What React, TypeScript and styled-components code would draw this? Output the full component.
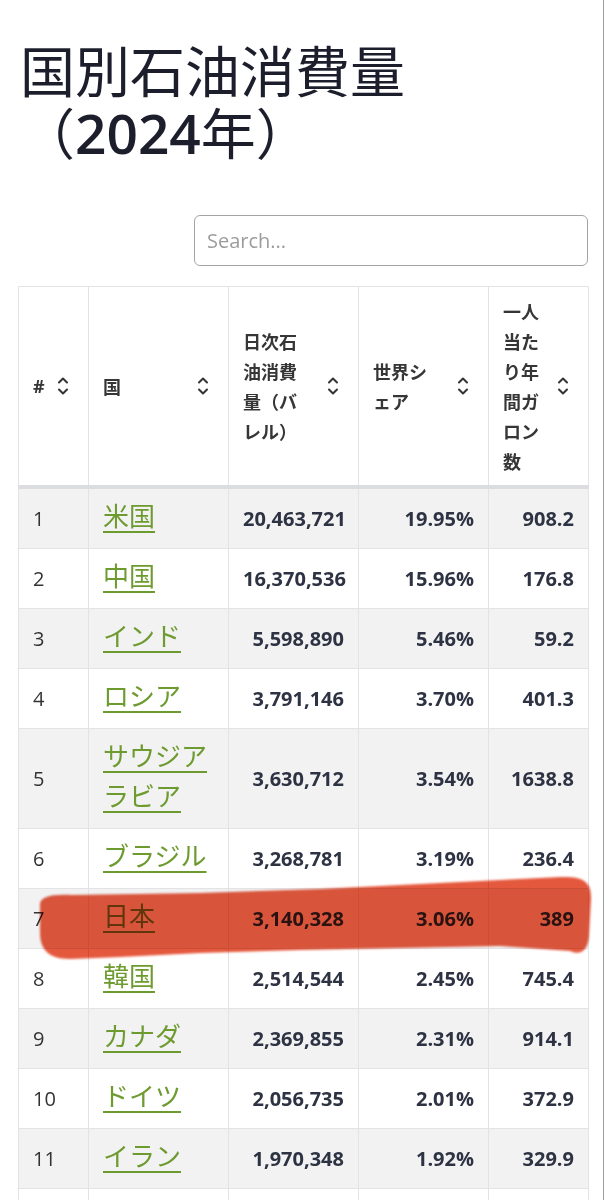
import React from 'react';
import styled, { createGlobalStyle } from 'styled-components';

const GlobalStyle = createGlobalStyle`
  html, body {
    margin: 0;
    padding: 0;
    background: #ffffff;
  }
  body {
    font-family: 'Open Sans', 'Noto Sans CJK JP', sans-serif;
    color: #2e3343;
  }
`;

type CountryRow = {
  rank: number;
  country: string;
  barrels: string;
  share: string;
  perCapita: string;
};

const rows: CountryRow[] = [
  { rank: 1, country: '米国', barrels: '20,463,721', share: '19.95%', perCapita: '908.2' },
  { rank: 2, country: '中国', barrels: '16,370,536', share: '15.96%', perCapita: '176.8' },
  { rank: 3, country: 'インド', barrels: '5,598,890', share: '5.46%', perCapita: '59.2' },
  { rank: 4, country: 'ロシア', barrels: '3,791,146', share: '3.70%', perCapita: '401.3' },
  { rank: 5, country: 'サウジアラビア', barrels: '3,630,712', share: '3.54%', perCapita: '1638.8' },
  { rank: 6, country: 'ブラジル', barrels: '3,268,781', share: '3.19%', perCapita: '236.4' },
  { rank: 7, country: '日本', barrels: '3,140,328', share: '3.06%', perCapita: '389' },
  { rank: 8, country: '韓国', barrels: '2,514,544', share: '2.45%', perCapita: '745.4' },
  { rank: 9, country: 'カナダ', barrels: '2,369,855', share: '2.31%', perCapita: '914.1' },
  { rank: 10, country: 'ドイツ', barrels: '2,056,735', share: '2.01%', perCapita: '372.9' },
  { rank: 11, country: 'イラン', barrels: '1,970,348', share: '1.92%', perCapita: '329.9' },
];

const columns = [
  { key: 'rank', label: '#', width: 70 },
  { key: 'country', label: '国', width: 140 },
  { key: 'barrels', label: '日次石油消費量（バレル）', width: 130 },
  { key: 'share', label: '世界シェア', width: 130 },
  { key: 'perCapita', label: '一人当たり年間ガロン数', width: 100 },
];

const SortIcon = () => (
  <$SortSvg
    width="12"
    height="20"
    viewBox="0 0 12 20"
    fill="none"
    stroke="#343434"
    strokeWidth="2"
    strokeLinecap="round"
    strokeLinejoin="round"
  >
    <path d="M2 6.5 L6 2.5 L10 6.5" />
    <path d="M2 13.5 L6 17.5 L10 13.5" />
  </$SortSvg>
);

// hand-drawn highlighter stroke across the 日本 row
const Marker = () => (
  <$MarkerSvg width="608" height="1200" viewBox="0 0 608 1200">
    <defs>
      <filter id="soft" x="-5%" y="-20%" width="110%" height="140%">
        <feGaussianBlur stdDeviation="1.2" />
      </filter>
    </defs>
    <path
      filter="url(#soft)"
      fill="#e4583d"
      d="M40 906
         C39 897 50 894 72 895
         L200 893 L320 889 L420 884 L500 880 L560 877
         C584 876 592 882 591 900
         L589 936
         C588 950 581 956 570 951
         L500 946 L400 948 L300 950 L200 953 L120 957 L70 959
         C47 959 40 948 40 932 Z"
    />
  </$MarkerSvg>
);

export default function App() {
  return (
    <$Page>
      <GlobalStyle />
      <$Title>
        国別石油消費量
        <br />
        （<$TitleYear>2024</$TitleYear>年）
      </$Title>

      <$SearchRow>
        <$SearchInput type="text" placeholder="Search..." />
      </$SearchRow>

      <$Table>
        <colgroup>
          {columns.map((c) => (
            <$Col key={c.key} $width={c.width} />
          ))}
        </colgroup>
        <thead>
          <tr>
            {columns.map((c) => (
              <$HeadCell key={c.key}>
                <$HeadInner>
                  <$HeadLabel $latin={c.key === 'rank'}>{c.label}</$HeadLabel>
                  <SortIcon />
                </$HeadInner>
              </$HeadCell>
            ))}
          </tr>
        </thead>
        <tbody>
          {rows.map((r) => (
            <$Row key={r.rank}>
              <$Cell>{r.rank}</$Cell>
              <$Cell>
                <$CountryLink href="#">{r.country}</$CountryLink>
              </$Cell>
              <$Cell $numeric>{r.barrels}</$Cell>
              <$Cell $numeric>{r.share}</$Cell>
              <$Cell $numeric>{r.perCapita}</$Cell>
            </$Row>
          ))}
          <$Row>
            <$Cell>&nbsp;</$Cell>
            <$Cell>&nbsp;</$Cell>
            <$Cell $numeric>&nbsp;</$Cell>
            <$Cell $numeric>&nbsp;</$Cell>
            <$Cell $numeric>&nbsp;</$Cell>
          </$Row>
        </tbody>
      </$Table>

      <Marker />
    </$Page>
  );
}

const $Page = styled.div`
  position: relative;
  width: 603px;
  height: 1200px;
  border-right: 1px solid #9c9c9c;
  overflow: hidden;
`;

const $Title = styled.h1`
  margin: 40px 0 0 20px;
  font-size: 55px;
  line-height: 62px;
  font-weight: 400;
  color: #1c1e2c;
  font-family: 'Open Sans', 'Noto Sans CJK JP', sans-serif;
`;

const $TitleYear = styled.span`
  font-weight: 600;
`;

const $SearchRow = styled.div`
  display: flex;
  justify-content: flex-end;
  padding-right: 15px;
  margin-top: 51px;
`;

const $SearchInput = styled.input`
  box-sizing: border-box;
  width: 394px;
  height: 51px;
  padding: 0 12px;
  border: 1px solid #a4a4a4;
  border-radius: 6px;
  font-family: 'Open Sans', sans-serif;
  font-size: 20px;
  color: #333;
  outline: none;

  &::placeholder {
    color: #9c9c9c;
  }
`;

const $Table = styled.table`
  margin: 20px 0 0 18px;
  width: 570px;
  table-layout: fixed;
  border-collapse: collapse;
  border: 1px solid #e3e3e6;
`;

const $Col = styled.col<{ $width: number }>`
  width: ${({ $width }) => $width}px;
`;

const $HeadCell = styled.th`
  padding: 9px 14px;
  border: 1px solid #e3e3e6;
  border-bottom: 4px solid #dcdde1;
  text-align: left;
  vertical-align: middle;
  background: #ffffff;
`;

const $HeadInner = styled.div`
  display: flex;
  align-items: center;
  gap: 16px;
`;

const $HeadLabel = styled.span<{ $latin?: boolean }>`
  flex: 1 1 auto;
  min-width: 0;
  font-family: ${({ $latin }) =>
    $latin ? "'Open Sans', sans-serif" : "'Noto Sans CJK JP', sans-serif"};
  font-size: 18px;
  line-height: 30px;
  font-weight: 700;
  color: #363636;
`;

const $SortSvg = styled.svg`
  flex: none;
  margin-right: 5px;
`;

const $Row = styled.tr`
  &:nth-child(odd) {
    background: #f2f2f3;
  }
`;

const $Cell = styled.td<{ $numeric?: boolean }>`
  padding: 10px 14px 9px;
  border: 1px solid #e3e3e6;
  font-size: 20px;
  line-height: 40px;
  vertical-align: middle;
  text-align: ${({ $numeric }) => ($numeric ? 'right' : 'left')};
  font-weight: ${({ $numeric }) => ($numeric ? 700 : 400)};
  color: ${({ $numeric }) => ($numeric ? '#2e3343' : '#333333')};
`;

const $CountryLink = styled.a`
  font-family: 'Noto Sans CJK JP', sans-serif;
  font-size: 26px;
  line-height: 32px;
  font-weight: 400;
  color: #6e9b2f;
  text-decoration: underline;
  text-decoration-thickness: 2px;
  text-underline-offset: 5px;
`;

const $MarkerSvg = styled.svg`
  position: absolute;
  top: 0;
  left: 0;
  pointer-events: none;
  mix-blend-mode: multiply;
`;
